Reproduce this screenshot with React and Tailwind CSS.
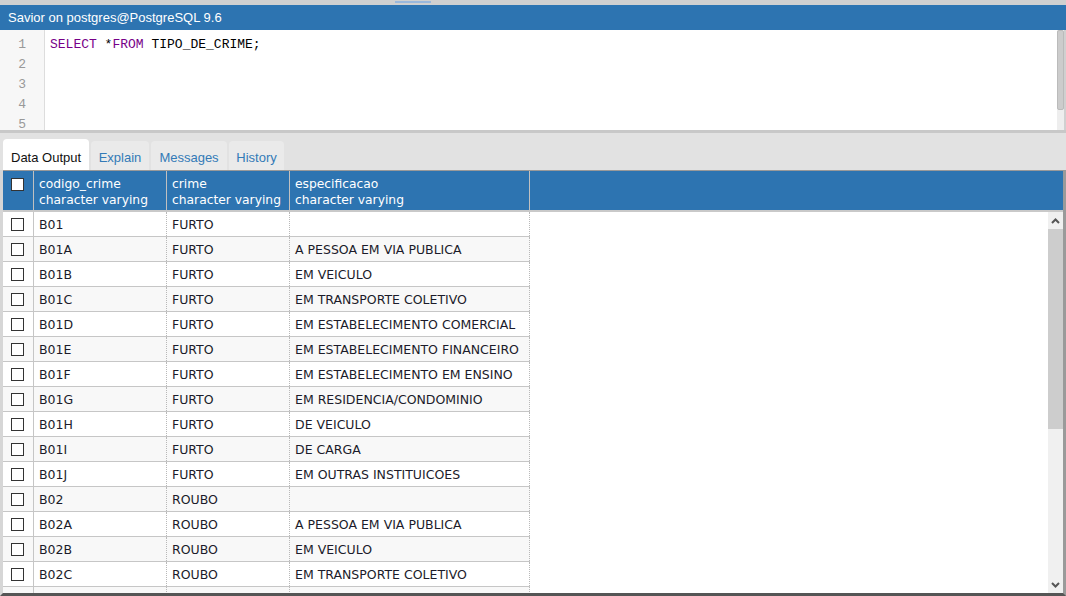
import React from "react";

const rows = [
  ["B01", "FURTO", ""],
  ["B01A", "FURTO", "A PESSOA EM VIA PUBLICA"],
  ["B01B", "FURTO", "EM VEICULO"],
  ["B01C", "FURTO", "EM TRANSPORTE COLETIVO"],
  ["B01D", "FURTO", "EM ESTABELECIMENTO COMERCIAL"],
  ["B01E", "FURTO", "EM ESTABELECIMENTO FINANCEIRO"],
  ["B01F", "FURTO", "EM ESTABELECIMENTO EM ENSINO"],
  ["B01G", "FURTO", "EM RESIDENCIA/CONDOMINIO"],
  ["B01H", "FURTO", "DE VEICULO"],
  ["B01I", "FURTO", "DE CARGA"],
  ["B01J", "FURTO", "EM OUTRAS INSTITUICOES"],
  ["B02", "ROUBO", ""],
  ["B02A", "ROUBO", "A PESSOA EM VIA PUBLICA"],
  ["B02B", "ROUBO", "EM VEICULO"],
  ["B02C", "ROUBO", "EM TRANSPORTE COLETIVO"],
];

const sans = { fontFamily: '"Liberation Sans", Arial, sans-serif' };
const grid = { fontFamily: '"DejaVu Sans", Verdana, sans-serif' };
const mono = { fontFamily: '"Liberation Mono", "Courier New", monospace' };

function Box() {
  return <div className="w-[13px] h-[13px] border border-[#333] bg-white" />;
}

export default function App() {
  return (
    <div className="w-[1066px] h-[596px] overflow-hidden bg-[#dcdcdc] flex flex-col" style={sans}>
      {/* top strip */}
      <div className="h-[5px] bg-[#d0d0d0] flex justify-start">
        <div className="ml-[395px] w-[36px] h-[2px] mt-[1px] bg-[#9ab8dc]" />
      </div>
      {/* title */}
      <div className="h-[25px] bg-[#2d74b1] text-white text-[13px] leading-[25px] pl-[8px]">
        Savior on postgres@PostgreSQL 9.6
      </div>
      {/* editor */}
      <div className="h-[100px] flex bg-white">
        <div className="w-[45px] bg-[#f7f7f7] border-r border-[#dddddd] pt-[5px] text-[13px] text-[#999] text-right pr-[18px]" style={mono}>
          {[1, 2, 3, 4, 5].map((n) => (
            <div key={n} className="h-[20px] leading-[20px]">{n}</div>
          ))}
        </div>
        <div className="flex-1 pt-[5px] pl-[5px] text-[13px] leading-[20px] text-black" style={mono}>
          <span className="text-[#770088]">SELECT</span> *<span className="text-[#770088]">FROM</span> TIPO_DE_CRIME;
        </div>
        <div className="w-[7px] bg-[#eeeeee] flex flex-col">
          <div className="h-[80px] bg-[#cccccc] border border-[#bbbbbb] rounded-[2px]" />
        </div>
        <div className="w-[2px] bg-[#d0d0d0]" />
      </div>
      <div className="h-[3px] bg-[#c8c8c8]" />
      {/* tabs */}
      <div className="h-[37px] bg-[#e2e2e2] flex items-end pl-[3px] gap-[2px] text-[13px]">
        <div className="h-[31px] w-[86px] bg-white rounded-t-[4px] text-[#111] pl-[8px] leading-[38px]">Data Output</div>
        <div className="h-[29px] w-[58px] bg-[#eaeaea] rounded-t-[4px] text-[#337ab7] text-center leading-[34px]">Explain</div>
        <div className="h-[29px] w-[76px] bg-[#eaeaea] rounded-t-[4px] text-[#337ab7] text-center leading-[34px]">Messages</div>
        <div className="h-[29px] w-[55px] bg-[#eaeaea] rounded-t-[4px] text-[#337ab7] text-center leading-[34px]">History</div>
      </div>
      {/* grid */}
      <div className="flex-1 flex border-l-[3px] border-[#d6d6d6] border-r-[3px] border-r-[#9a9a9a] border-b-[3px] border-b-[#555] overflow-hidden" style={grid}>
        <div className="flex-1 flex flex-col bg-white overflow-hidden">
          {/* header */}
          <div className="h-[42px] shrink-0 bg-[#2d74b1] flex border-t border-[#999] border-b-[2px] border-b-[#c9c9c9] text-white text-[12.3px] leading-[16px]">
            <div className="w-[31px] border-r border-[#c0c0c0] flex items-start justify-center pt-[7px] pr-[1px]">
              <div className="w-[13px] h-[13px] border border-[#333] bg-white" />
            </div>
            <div className="w-[133px] border-r border-[#c0c0c0] pl-[5px] pt-[5px]">
              <div>codigo_crime</div>
              <div>character varying</div>
            </div>
            <div className="w-[123px] border-r border-[#c0c0c0] pl-[5px] pt-[5px]">
              <div>crime</div>
              <div>character varying</div>
            </div>
            <div className="w-[240px] border-r border-[#c0c0c0] pl-[5px] pt-[5px]">
              <div>especificacao</div>
              <div>character varying</div>
            </div>
            <div className="flex-1" />
          </div>
          {/* body */}
          <div className="flex-1 flex overflow-hidden">
            <div className="flex flex-col">
              {rows.map((r, i) => (
                <div
                  key={r[0]}
                  className={`h-[25px] shrink-0 flex border-b border-[#c6c6c6] text-[12.5px] text-[#1b1b2a] ${i % 2 === 1 ? "bg-[#f8f8f8]" : "bg-white"}`}
                >
                  <div className="w-[31px] border-r border-[#c6c6c6] flex items-center justify-center pr-[1px]">
                    <Box />
                  </div>
                  <div className="w-[133px] border-r border-dotted border-[#b8b8b8] pl-[5px] leading-[26px]">{r[0]}</div>
                  <div className="w-[123px] border-r border-dotted border-[#b8b8b8] pl-[5px] leading-[26px]">{r[1]}</div>
                  <div className="w-[240px] border-r border-dotted border-[#b8b8b8] pl-[5px] leading-[26px] whitespace-nowrap overflow-hidden">{r[2]}</div>
                </div>
              ))}
              <div className="h-[25px] shrink-0 flex bg-[#f8f8f8]">
                <div className="w-[31px] border-r border-[#c6c6c6]" />
                <div className="w-[133px] border-r border-dotted border-[#b8b8b8]" />
                <div className="w-[123px] border-r border-dotted border-[#b8b8b8]" />
                <div className="w-[240px] border-r border-dotted border-[#b8b8b8]" />
              </div>
            </div>
            <div className="flex-1 bg-white" />
            {/* scrollbar */}
            <div className="w-[15px] bg-[#f0f0f0] flex flex-col">
              <div className="h-[17px] flex items-center justify-center">
                <svg width="9" height="6" viewBox="0 0 9 6"><path d="M1 5 L4.5 1.5 L8 5" stroke="#555" strokeWidth="2" fill="none" /></svg>
              </div>
              <div className="h-[200px] bg-[#cdcdcd]" />
              <div className="flex-1" />
              <div className="h-[17px] flex items-center justify-center">
                <svg width="9" height="6" viewBox="0 0 9 6"><path d="M1 1 L4.5 4.5 L8 1" stroke="#555" strokeWidth="2" fill="none" /></svg>
              </div>
            </div>
          </div>
        </div>
      </div>
    </div>
  );
}
